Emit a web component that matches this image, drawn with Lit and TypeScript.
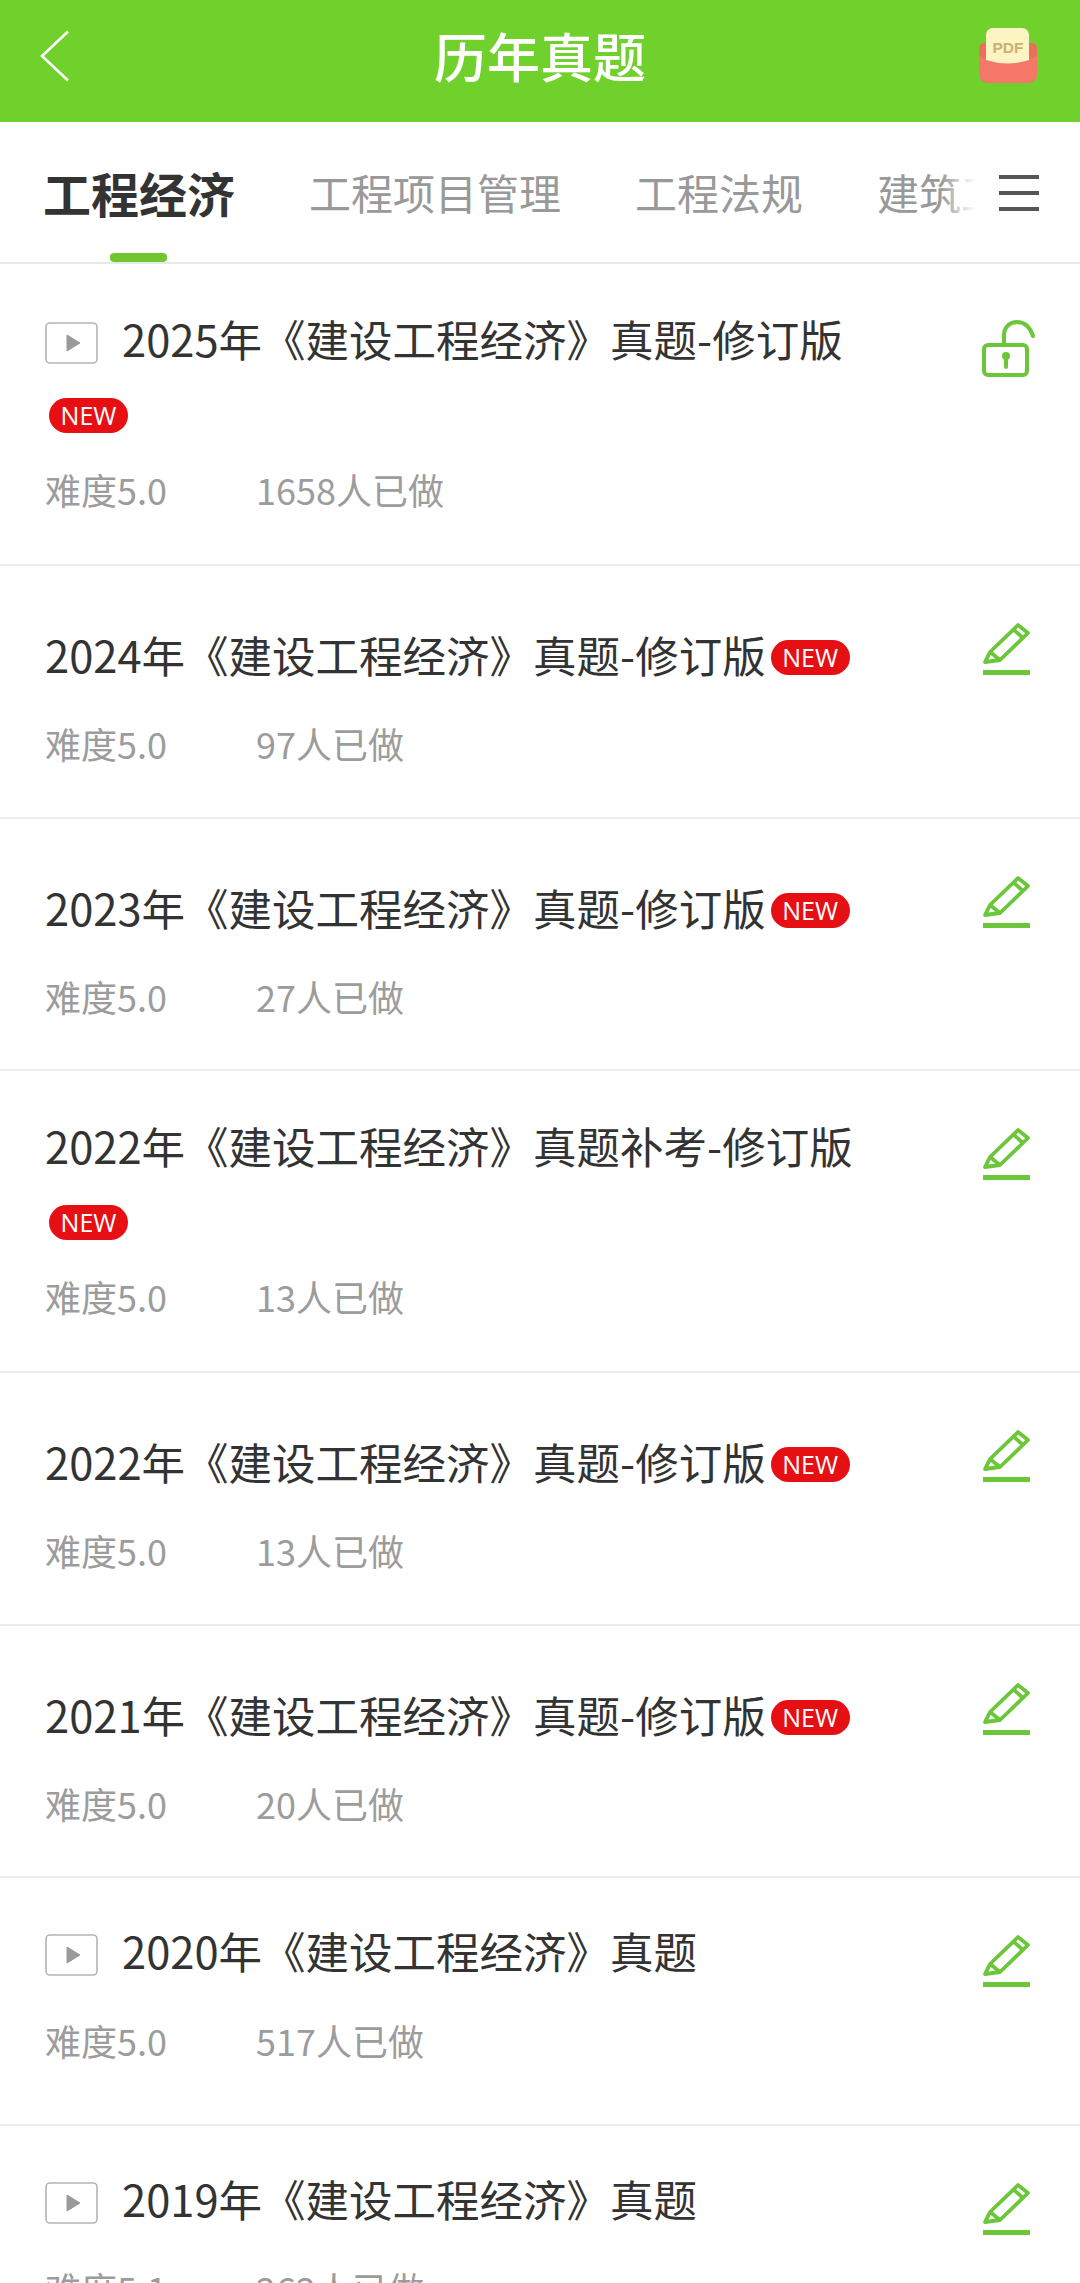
import { LitElement, css, html, nothing } from 'lit';
import { customElement } from 'lit/decorators.js';

type Paper = {
  title: string;
  difficulty: string;
  done: string;
  video?: boolean;
  isNew?: boolean;
  locked?: boolean;
  layout: 'wrapped' | 'single' | 'video';
};

const PAPERS: Paper[] = [
  { title: '2025年《建设工程经济》真题-修订版', difficulty: '5.0', done: '1658', video: true, isNew: true, locked: true, layout: 'wrapped' },
  { title: '2024年《建设工程经济》真题-修订版', difficulty: '5.0', done: '97', isNew: true, layout: 'single' },
  { title: '2023年《建设工程经济》真题-修订版', difficulty: '5.0', done: '27', isNew: true, layout: 'single' },
  { title: '2022年《建设工程经济》真题补考-修订版', difficulty: '5.0', done: '13', isNew: true, layout: 'wrapped' },
  { title: '2022年《建设工程经济》真题-修订版', difficulty: '5.0', done: '13', isNew: true, layout: 'single' },
  { title: '2021年《建设工程经济》真题-修订版', difficulty: '5.0', done: '20', isNew: true, layout: 'single' },
  { title: '2020年《建设工程经济》真题', difficulty: '5.0', done: '517', video: true, layout: 'video' },
  { title: '2019年《建设工程经济》真题', difficulty: '5.1', done: '262', video: true, layout: 'video' },
];

const TABS = ['工程项目管理', '工程法规', '建筑工程'];

@customElement('app-root')
export class AppRoot extends LitElement {
  static styles = css`
    :host {
      display: block;
      height: 2283px;
      overflow: hidden;
      background: #fff;
      font-family: 'Noto Sans CJK SC', 'Noto Sans', sans-serif;
      color: #333;
    }

    .header {
      height: 122px;
      background: #70d02c;
      display: flex;
      align-items: center;
      justify-content: space-between;
      padding: 0 42px 10px 40px;
      box-sizing: border-box;
      position: relative;
    }

    .header h1 {
      position: absolute;
      left: 0;
      right: 0;
      top: 24px;
      margin: 0;
      text-align: center;
      color: #fff;
      font-size: 53px;
      line-height: 62px;
      font-weight: 500;
    }

    .tabs {
      height: 142px;
      display: flex;
      border-bottom: 2px solid #e8e8e8;
      box-sizing: border-box;
    }

    .tab-list {
      flex: 1;
      min-width: 0;
      display: flex;
      gap: 74px;
      padding-left: 43px;
      overflow: hidden;
      white-space: nowrap;
      position: relative;
    }

    .tab-list::after {
      content: '';
      position: absolute;
      right: 0;
      top: 0;
      bottom: 0;
      width: 34px;
      background: linear-gradient(to right, rgba(255, 255, 255, 0), #fff);
    }

    .tab {
      flex: none;
      font-size: 42px;
      line-height: 140px;
      height: 140px;
      color: #999;
    }

    .tab.active {
      font-size: 48px;
      font-weight: 700;
      color: #333;
      position: relative;
    }

    .tab.active::after {
      content: '';
      position: absolute;
      left: 67px;
      bottom: 0;
      width: 57px;
      height: 9px;
      border-radius: 4px;
      background: #70c62f;
    }

    .menu {
      flex: none;
      width: 105px;
      display: flex;
      align-items: center;
      padding: 2px 0 0 24px;
      box-sizing: border-box;
    }

    .row {
      display: flex;
      justify-content: space-between;
      padding: 0 44px 0 45px;
      border-bottom: 2px solid #ececec;
      box-sizing: border-box;
    }

    .body {
      width: 880px;
    }

    .wrapped {
      height: 302px;
    }

    .wrapped .body {
      padding-top: 37px;
    }

    .single {
      height: 252.5px;
    }

    .single .body {
      padding-top: 51px;
    }

    .video {
      height: 248px;
    }

    .video .body {
      padding-top: 35px;
    }

    .title {
      font-size: 43.5px;
      line-height: 76px;
      color: #333;
    }

    .play {
      display: inline-block;
      width: 53px;
      height: 42px;
      margin-right: 24px;
      vertical-align: -7px;
    }

    .new {
      display: inline-block;
      width: 79px;
      height: 35px;
      line-height: 35px;
      border-radius: 18px;
      background: #e60f14;
      color: #fff;
      font-family: 'Open Sans', sans-serif;
      font-size: 25px;
      text-align: center;
      vertical-align: 6px;
      margin-left: 5px;
    }

    .wrapped .new {
      display: block;
      margin: 21px 0 0 4px;
    }

    .meta {
      display: flex;
      font-size: 36px;
      line-height: 50px;
      color: #9c9c9c;
    }

    .wrapped .meta {
      margin-top: 31px;
    }

    .single .meta {
      margin-top: 25px;
    }

    .video .meta {
      margin-top: 26px;
    }

    .difficulty {
      width: 211px;
    }

    .action {
      flex: none;
      width: 54px;
      margin-top: 56px;
    }

    svg {
      display: block;
    }
  `;

  private renderBack() {
    return html`<svg width="30" height="52" viewBox="0 0 30 52" fill="none">
      <path d="M28 1.5 2 26l26 24.5" stroke="#fff" stroke-width="2.6" />
    </svg>`;
  }

  private renderPdf() {
    return html`<svg width="60" height="56" viewBox="0 0 60 56">
      <path d="M6 15h48a5 5 0 0 1 5 5v26a9 9 0 0 1-9 9H10a9 9 0 0 1-9-9V20a5 5 0 0 1 5-5z" fill="#e9705a" />
      <path d="M1 27q29 17 58 0v19a9 9 0 0 1-9 9H10a9 9 0 0 1-9-9z" fill="#f5776a" />
      <path d="M14 0h30a7 7 0 0 1 7 7v25q-21 7-43 0V7a7 7 0 0 1 6-7z" fill="#fdf4c4" />
      <text x="30" y="24.500" text-anchor="middle" font-family="Liberation Sans" font-weight="700" font-size="15.5" fill="#c9b26e">PDF</text>
    </svg>`;
  }

  private renderMenu() {
    return html`<svg width="40" height="36" viewBox="0 0 40 36" fill="#555">
      <rect y="0" width="40" height="4" />
      <rect y="16" width="40" height="4" />
      <rect y="32" width="40" height="4" />
    </svg>`;
  }

  private renderPlay() {
    return html`<svg class="play" viewBox="0 0 53 42">
      <rect x="1" y="1" width="51" height="40" rx="4" fill="#fff" stroke="#b5b5b5" stroke-width="1.6" />
      <path d="M22 13l13 8-13 8z" fill="#9a9a9a" stroke="#9a9a9a" stroke-linejoin="round" />
    </svg>`;
  }

  private renderLock() {
    return html`<svg width="54" height="58" viewBox="0 0 54 58" fill="none" stroke="#6cc63a" stroke-width="4">
      <rect x="2" y="25" width="43" height="30" rx="4" />
      <path d="M22 24V15C22 7 28 2 35 2s13 5 16 14" stroke-linecap="round" />
      <path d="M24 38v9" stroke-linecap="round" />
      <circle cx="24" cy="36" r="4" fill="#6cc63a" stroke="none" />
    </svg>`;
  }

  private renderPencil() {
    return html`<svg width="54" height="54" viewBox="0 0 54 54" fill="none" stroke="#6cc63a" stroke-width="3.8" stroke-linejoin="round">
      <path d="M3 40 8 30 36 3 46 11 18 38z" />
      <path d="M8 30 18 38" />
      <path d="M31 7 41 16" />
      <path d="M1 50.500h47" stroke-width="5" />
    </svg>`;
  }

  private renderPaper(paper: Paper) {
    return html`<div class="row ${paper.layout}">
      <div class="body">
        <div class="title">
          ${paper.video ? this.renderPlay() : nothing}${paper.title}${paper.isNew
            ? html`<span class="new">NEW</span>`
            : nothing}
        </div>
        <div class="meta">
          <span class="difficulty">难度${paper.difficulty}</span>
          <span>${paper.done}人已做</span>
        </div>
      </div>
      <div class="action">${paper.locked ? this.renderLock() : this.renderPencil()}</div>
    </div>`;
  }

  render() {
    return html`
      <div class="header">
        ${this.renderBack()}
        <h1>历年真题</h1>
        ${this.renderPdf()}
      </div>
      <div class="tabs">
        <div class="tab-list">
          <div class="tab active">工程经济</div>
          ${TABS.map((tab) => html`<div class="tab">${tab}</div>`)}
        </div>
        <div class="menu">${this.renderMenu()}</div>
      </div>
      ${PAPERS.map((paper) => this.renderPaper(paper))}
    `;
  }
}

declare global {
  interface HTMLElementTagNameMap {
    'app-root': AppRoot;
  }
}
